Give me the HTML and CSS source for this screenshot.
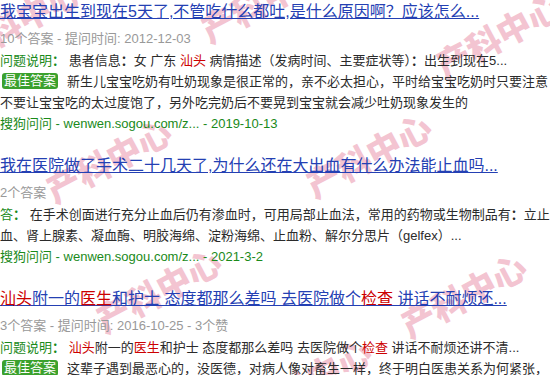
FILE: index.html
```html
<!DOCTYPE html>
<html lang="zh-CN">
<head>
	<meta charset="UTF-8">
	<title>搜索结果</title>
	<link rel="stylesheet" href="styles.css">
</head>
<body>
	<div class="page">
		<div class="item">
			<h3 class="title"><a href="#">我宝宝出生到现在5天了,不管吃什么都吐,是什么原因啊？应该怎么...</a></h3>
			<div class="meta">10个答案 - 提问时间: 2012-12-03</div>
			<div class="line"><span class="label">问题说明<b>：</b></span> 患者信息<b>：</b>女 广东 <em>汕头</em> 病情描述（发病时间、主要症状等）<b>：</b>出生到现在5...</div>
			<div class="line"><span class="badge">最佳答案</span>新生儿宝宝吃奶有吐奶现象是很正常的，亲不必太担心，平时给宝宝吃奶时只要注意不要让宝宝吃的太过度饱了，另外吃完奶后不要晃到宝宝就会减少吐奶现象发生的</div>
			<div class="source">搜狗问问 - wenwen.sogou.com/z... - 2019-10-13</div>
		</div>

		<div class="item">
			<h3 class="title"><a href="#">我在医院做了手术二十几天了,为什么还在大出血有什么办法能止血吗...</a></h3>
			<div class="meta">2个答案</div>
			<div class="line"><span class="label">答<b>：</b></span> 在手术创面进行充分止血后仍有渗血时，可用局部止血法，常用的药物或生物制品有<b>：</b>立止血、肾上腺素、凝血酶、明胶海绵、淀粉海绵、止血粉、解尔分思片（gelfex）...</div>
			<div class="source">搜狗问问 - wenwen.sogou.com/z... - 2021-3-2</div>
		</div>

		<div class="item">
			<h3 class="title"><a href="#"><em>汕头</em>附一的<em>医生</em>和护士 态度都那么差吗 去医院做个<em>检查</em> 讲话不耐烦还...</a></h3>
			<div class="meta">3个答案 - 提问时间: 2016-10-25 - 3个赞</div>
			<div class="line"><span class="label">问题说明<b>：</b></span> <em>汕头</em>附一的<em>医生</em>和护士 态度都那么差吗 去医院做个<em>检查</em> 讲话不耐烦还讲不清...</div>
			<div class="line"><span class="badge">最佳答案</span>这辈子遇到最恶心的，没医德，对病人像对畜生一样，终于明白医患关系为何紧张，希望大家以后看病多留个心眼</div>
		</div>

		<!-- 水印 -->
		<span class="wm" style="left:-50px;top:-5px">产科中心</span>
		<span class="wm" style="left:195px;top:-25px">产科中心</span>
		<span class="wm" style="left:430px;top:10px">产科中心</span>
		<span class="wm" style="left:40px;top:135px">产科中心</span>
		<span class="wm" style="left:300px;top:130px">产科中心</span>
		<span class="wm" style="left:90px;top:265px">产科中心</span>
		<span class="wm" style="left:395px;top:270px">产科中心</span>
		<span class="wm" style="left:240px;top:355px">产科中心</span>
	</div>
</body>
</html>
```

FILE: styles.css
```css
body{
	margin: 0;
	background: #fff;
	font-family: "Liberation Sans", "Noto Sans CJK SC", sans-serif;
	font-size: 13px;
	color: #2b2b2b;
	overflow: hidden;
}
.page{
	position: relative;
	width: 550px;
	height: 375px;
	overflow: hidden;
}
.item{
	margin-bottom: 20px;
}
.title{
	margin: 0 0 4px 0;
	font-size: 16px;
	font-weight: normal;
	line-height: 24px;
	white-space: nowrap;
}
.title a{
	color: #2440b3;
	text-decoration: underline;
}
em{
	font-style: normal;
	color: #c00;
}
/* 全角冒号居中 */
b{
	font-family: "Noto Sans CJK TC", sans-serif;
	font-weight: bold;
}
.meta{
	line-height: 21px;
	color: #999;
}
.line{
	line-height: 21px;
}
.label{
	color: #1a8a1a;
}
.badge{
	display: inline-block;
	margin: 0 9px 0 2px;
	padding: 0 2px;
	line-height: 16px;
	border-radius: 3px;
	background: #3ba12d;
	color: #fff;
	vertical-align: 1px;
}
.source{
	line-height: 21px;
	color: #1a8a1a;
}
/* 水印 */
.wm{
	position: absolute;
	z-index: -1;
	font-family: "Noto Sans CJK SC", sans-serif;
	font-size: 34px;
	font-weight: 900;
	color: #f3c4d1;
	white-space: nowrap;
	transform: rotate(-28deg);
	pointer-events: none;
}
```
